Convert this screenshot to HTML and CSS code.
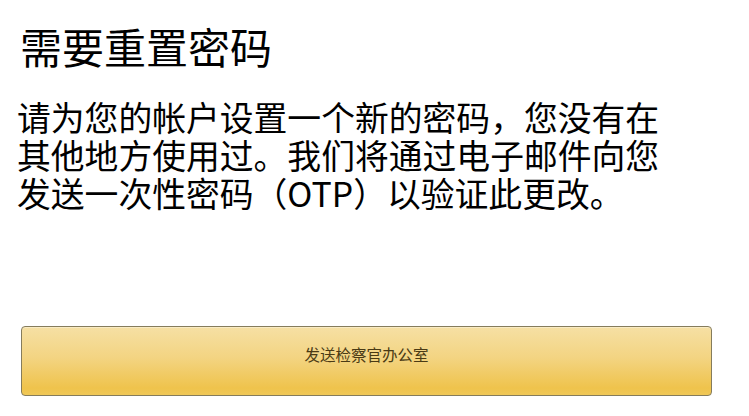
FILE: index.html
```html
<!DOCTYPE html>
<html lang="zh-CN">
<head>
<meta charset="utf-8">
<title>需要重置密码</title>
<link rel="stylesheet" href="styles.css">
</head>
<body>
<main class="page">
  <h1 class="title">需要重置密码</h1>
  <p class="intro">请为您的帐户设置一个新的密码，您没有在其他地方使用过。我们将通过电子邮件向您发送一次性密码（OTP）以验证此更改。</p>
  <button class="send-btn" type="button">发送检察官办公室</button>
</main>
</body>
</html>
```

FILE: styles.css
```css
html, body {
  margin: 0;
  padding: 0;
  background: #ffffff;
}
body {
  width: 749px;
  height: 416px;
  overflow: hidden;
  font-family: "Noto Sans CJK SC", "Noto Sans", sans-serif;
  color: #000;
}
.page {
  display: flex;
  flex-direction: column;
  align-items: flex-start;
  padding: 25px 0 0 20px;
}
.title {
  margin: 0;
  font-size: 42px;
  line-height: 42px;
  font-weight: 400;
  letter-spacing: 0;
}
.intro {
  margin: 31px 0 0 -3px;
  width: 665px;
  font-size: 33.8px;
  line-height: 38px;
  font-weight: 400;
}
.send-btn {
  margin: 0 0 0 1px;
  margin-top: 114px;
  width: 691px;
  height: 70px;
  border: 1.5px solid #857c5c;
  border-radius: 4px;
  background: linear-gradient(to bottom, #f6e0a4 0%, #f3d482 45%, #efc34c 90%, #f0c858 100%);
  box-shadow: inset 0 1px 0 rgba(255,255,255,0.35);
  font-family: "Noto Sans CJK SC", sans-serif;
  font-size: 15.5px;
  color: #4a3a14;
  padding: 0 0 14px 0;
}
```
